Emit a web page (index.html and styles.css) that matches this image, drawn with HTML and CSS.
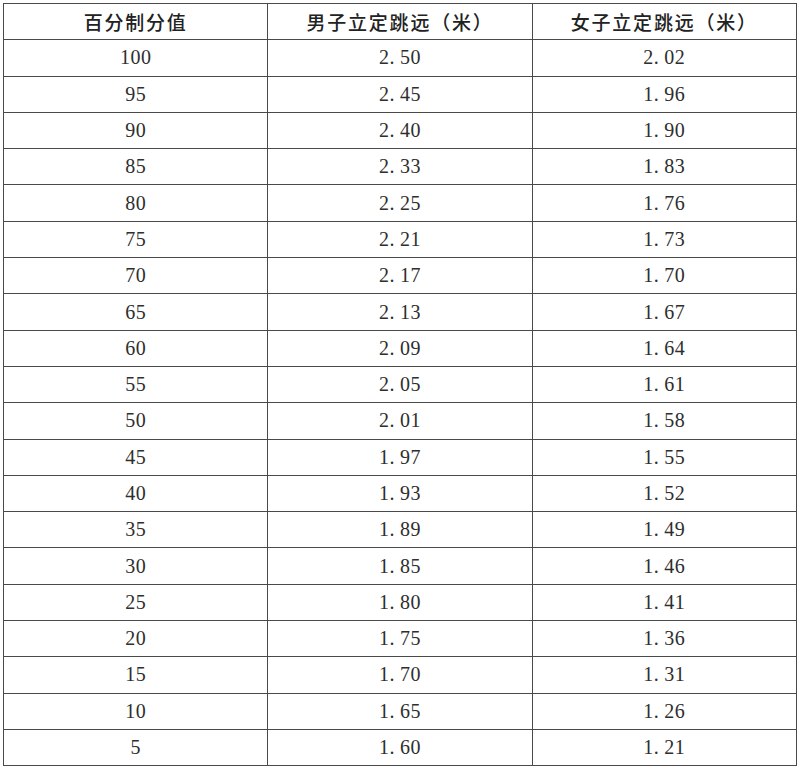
FILE: index.html
```html
<!DOCTYPE html>
<html lang="zh">
<head>
<meta charset="utf-8">
<link rel="stylesheet" href="styles.css">
</head>
<body>
<table class="score">
<thead>
<tr><th>百分制分值</th><th>男子立定跳远（米）</th><th>女子立定跳远（米）</th></tr>
</thead>
<tbody>
<tr><td>100</td><td>2<span class="dot">.</span>50</td><td>2<span class="dot">.</span>02</td></tr>
<tr><td>95</td><td>2<span class="dot">.</span>45</td><td>1<span class="dot">.</span>96</td></tr>
<tr><td>90</td><td>2<span class="dot">.</span>40</td><td>1<span class="dot">.</span>90</td></tr>
<tr><td>85</td><td>2<span class="dot">.</span>33</td><td>1<span class="dot">.</span>83</td></tr>
<tr><td>80</td><td>2<span class="dot">.</span>25</td><td>1<span class="dot">.</span>76</td></tr>
<tr><td>75</td><td>2<span class="dot">.</span>21</td><td>1<span class="dot">.</span>73</td></tr>
<tr><td>70</td><td>2<span class="dot">.</span>17</td><td>1<span class="dot">.</span>70</td></tr>
<tr><td>65</td><td>2<span class="dot">.</span>13</td><td>1<span class="dot">.</span>67</td></tr>
<tr><td>60</td><td>2<span class="dot">.</span>09</td><td>1<span class="dot">.</span>64</td></tr>
<tr><td>55</td><td>2<span class="dot">.</span>05</td><td>1<span class="dot">.</span>61</td></tr>
<tr><td>50</td><td>2<span class="dot">.</span>01</td><td>1<span class="dot">.</span>58</td></tr>
<tr><td>45</td><td>1<span class="dot">.</span>97</td><td>1<span class="dot">.</span>55</td></tr>
<tr><td>40</td><td>1<span class="dot">.</span>93</td><td>1<span class="dot">.</span>52</td></tr>
<tr><td>35</td><td>1<span class="dot">.</span>89</td><td>1<span class="dot">.</span>49</td></tr>
<tr><td>30</td><td>1<span class="dot">.</span>85</td><td>1<span class="dot">.</span>46</td></tr>
<tr><td>25</td><td>1<span class="dot">.</span>80</td><td>1<span class="dot">.</span>41</td></tr>
<tr><td>20</td><td>1<span class="dot">.</span>75</td><td>1<span class="dot">.</span>36</td></tr>
<tr><td>15</td><td>1<span class="dot">.</span>70</td><td>1<span class="dot">.</span>31</td></tr>
<tr><td>10</td><td>1<span class="dot">.</span>65</td><td>1<span class="dot">.</span>26</td></tr>
<tr><td>5</td><td>1<span class="dot">.</span>60</td><td>1<span class="dot">.</span>21</td></tr>
</tbody>
</table>
</body>
</html>
```
FILE: styles.css
```css
html, body {
  background: #ffffff;
}
body {
  margin: 3px;
}
.score {
  border-collapse: collapse;
  width: 794px;
  table-layout: fixed;
  color: #2e2e2e;
}
.score tr {
  height: 36.3px;
}
.score th,
.score td {
  border: 1px solid #4a4a4a;
  text-align: center;
  vertical-align: middle;
  padding: 0;
  width: 33.33%;
}
.score th {
  font-family: "Noto Sans CJK SC", sans-serif;
  font-weight: 500;
  font-size: 19px;
  letter-spacing: 1.8px;
  color: #222;
}
.score td {
  font-family: "Liberation Serif", serif;
  font-size: 20px;
  letter-spacing: 0.5px;
}
.score .dot {
  margin-right: 5px;
}
```
